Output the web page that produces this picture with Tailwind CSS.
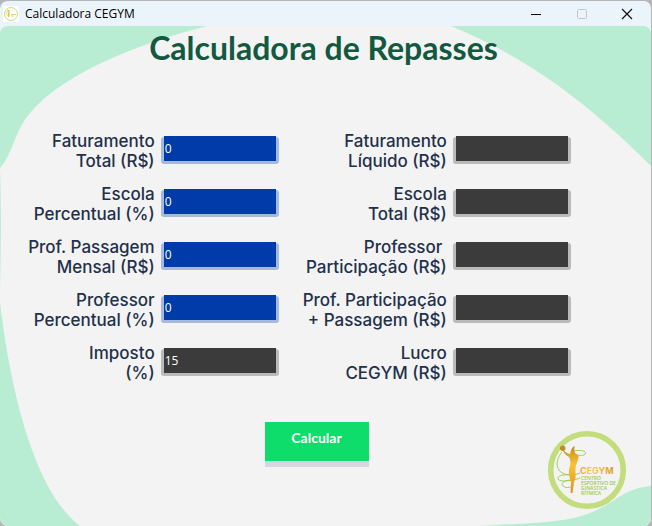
<!DOCTYPE html>
<html lang="pt-BR">
<head>
<meta charset="utf-8">
<meta name="viewport" content="width=device-width, initial-scale=1">
<title>Calculadora CEGYM</title>
<script src="https://cdn.jsdelivr.net/npm/@tailwindcss/browser@4"></script>
</head>
<body class="bg-[#b5b5b8]">
<div class="flex min-h-screen flex-col overflow-hidden rounded-lg border-t border-r border-[#b4b6b8] bg-[#ebf4fa]">
  <header class="flex h-[25px] items-center pr-px font-['Open_Sans','Noto_Sans',sans-serif]">
    <span class="ml-[3px] flex size-4 items-center justify-center bg-white">
      <svg class="size-4" viewBox="0 0 16 16" fill="none" aria-hidden="true"><circle cx="8" cy="8" r="6.5" stroke="#c3dc7c" stroke-width="1"/><path d="M4.500 4L6 5L5.500 11" stroke="#e5bb32" stroke-width="1.300"/><path d="M4.500 5C3 8 3 9.500 6.500 9.500M8 8.500h5M8 10h3" stroke="#d8c953" stroke-width=".8"/></svg>
    </span>
    <span class="ml-1.5 flex-1 text-[12px] text-black">Calculadora CEGYM</span>
    <button class="flex h-full w-[46px] items-center justify-center" aria-label="Minimizar"><svg class="size-3" viewBox="0 0 12 12" stroke="#000"><path d="M1 6.500h10"/></svg></button>
    <button class="flex h-full w-[45px] items-center justify-center" aria-label="Maximizar" disabled><svg class="size-3" viewBox="0 0 12 12" fill="none" stroke="#bfc5ca"><rect x="1.500" y="1.500" width="9" height="9" rx="1"/></svg></button>
    <button class="flex h-full w-[46px] items-center justify-center" aria-label="Fechar"><svg class="size-3" viewBox="0 0 12 12" stroke="#111" stroke-width="1.200"><path d="M1 1l10 10M11 1L1 11"/></svg></button>
  </header>
  <main class="relative isolate flex flex-1 flex-col overflow-hidden rounded-lg bg-[#f3f3f3]">
    <svg class="absolute inset-0 -z-10 size-full" viewBox="0 0 651 500" preserveAspectRatio="none" fill="#b8edd3" aria-hidden="true">
      <path d="M0 0H207C145 16 65 45 30 87C14 106 13 128 0 142Z"/>
      <path d="M451 0C530 33 588 77 651 140V0Z"/>
      <path d="M0 142C2 200 0 250 0 276C8 346 30 462 80 500H0Z"/>
      <path d="M480 500C530 497 565 497 590 487C617 476 622 463 651 460V500Z"/>
    </svg>
    <h1 class="pt-0.5 pr-1 text-center font-[Lato,sans-serif] text-[32px] leading-10 font-bold text-[#135940]">Calculadora de Repasses</h1>
    <form id="repasses" class="mt-[63px] flex justify-center gap-6 pr-[52px] font-[Inter,sans-serif] text-[17px] leading-5 font-medium text-[#23304a]">
      <div class="flex flex-col gap-[13px]">
        <div class="flex items-center justify-end gap-1.5"><label class="text-right" for="fat">Faturamento<br>Total (R$)</label><span class="mb-px flex rounded-[3px] bg-[#a6b9dd] px-[3px] pb-[3px]"><input id="fat" value="0" class="-mt-px h-[25px] w-28 bg-[#003ca9] px-px font-['Open_Sans',sans-serif] text-[12px] text-white outline-none"></span></div>
        <div class="flex items-center justify-end gap-1.5"><label class="text-right" for="esc">Escola<br>Percentual (%)</label><span class="mb-px flex rounded-[3px] bg-[#a6b9dd] px-[3px] pb-[3px]"><input id="esc" value="0" class="-mt-px h-[25px] w-28 bg-[#003ca9] px-px font-['Open_Sans',sans-serif] text-[12px] text-white outline-none"></span></div>
        <div class="flex items-center justify-end gap-1.5"><label class="text-right" for="pas">Prof. Passagem<br>Mensal (R$)</label><span class="mb-px flex rounded-[3px] bg-[#a6b9dd] px-[3px] pb-[3px]"><input id="pas" value="0" class="-mt-px h-[25px] w-28 bg-[#003ca9] px-px font-['Open_Sans',sans-serif] text-[12px] text-white outline-none"></span></div>
        <div class="flex items-center justify-end gap-1.5"><label class="text-right" for="pro">Professor<br>Percentual (%)</label><span class="mb-px flex rounded-[3px] bg-[#a6b9dd] px-[3px] pb-[3px]"><input id="pro" value="0" class="-mt-px h-[25px] w-28 bg-[#003ca9] px-px font-['Open_Sans',sans-serif] text-[12px] text-white outline-none"></span></div>
        <div class="flex items-center justify-end gap-1.5"><label class="text-right" for="imp">Imposto<br>(%)</label><span class="mb-px flex rounded-[3px] bg-[#bababa] px-[3px] pb-[3px]"><input id="imp" value="15" class="-mt-px h-[25px] w-28 bg-[#3b3b3b] px-px font-['Open_Sans',sans-serif] text-[12px] text-white outline-none"></span></div>
      </div>
      <div class="flex flex-col gap-[13px]">
        <div class="flex items-center justify-end gap-1.5"><label class="text-right" for="liq">Faturamento<br>Líquido (R$)</label><span class="mb-px flex rounded-[3px] bg-[#bababa] px-[3px] pb-[3px]"><input id="liq" readonly class="-mt-px h-[25px] w-28 bg-[#3b3b3b] px-px font-['Open_Sans',sans-serif] text-[12px] text-white outline-none"></span></div>
        <div class="flex items-center justify-end gap-1.5"><label class="text-right" for="tot">Escola<br>Total (R$)</label><span class="mb-px flex rounded-[3px] bg-[#bababa] px-[3px] pb-[3px]"><input id="tot" readonly class="-mt-px h-[25px] w-28 bg-[#3b3b3b] px-px font-['Open_Sans',sans-serif] text-[12px] text-white outline-none"></span></div>
        <div class="flex items-center justify-end gap-1.5"><label class="text-right" for="par">Professor&nbsp;<br>Participação (R$)</label><span class="mb-px flex rounded-[3px] bg-[#bababa] px-[3px] pb-[3px]"><input id="par" readonly class="-mt-px h-[25px] w-28 bg-[#3b3b3b] px-px font-['Open_Sans',sans-serif] text-[12px] text-white outline-none"></span></div>
        <div class="flex items-center justify-end gap-1.5"><label class="text-right" for="pp">Prof. Participação<br>+ Passagem (R$)</label><span class="mb-px flex rounded-[3px] bg-[#bababa] px-[3px] pb-[3px]"><input id="pp" readonly class="-mt-px h-[25px] w-28 bg-[#3b3b3b] px-px font-['Open_Sans',sans-serif] text-[12px] text-white outline-none"></span></div>
        <div class="flex items-center justify-end gap-1.5"><label class="text-right" for="luc">Lucro<br>CEGYM (R$)</label><span class="mb-px flex rounded-[3px] bg-[#bababa] px-[3px] pb-[3px]"><input id="luc" readonly class="-mt-px h-[25px] w-28 bg-[#3b3b3b] px-px font-['Open_Sans',sans-serif] text-[12px] text-white outline-none"></span></div>
      </div>
    </form>
    <footer class="mt-auto flex items-start justify-center pb-4">
      <div class="flex-1 pl-1.5"></div>
      <button form="repasses" type="button" class="flex w-[104px] flex-col bg-linear-to-b from-[#c3c2d3] to-[#d8d8e1] pb-1.5"><span class="w-full bg-[#0edc6b] pt-1.5 pb-[13px] font-[Lato,sans-serif] text-[14px] leading-5 font-bold text-white">Calcular</span></button>
      <div class="flex flex-1 justify-end pt-2 pr-6">
        <svg class="size-20" viewBox="0 0 80 80" fill="none" role="img" aria-label="CEGYM Centro Esportivo de Ginástica Rítmica">
          <defs>
            <linearGradient id="gold" x1="0" y1="0" x2="0" y2="1"><stop stop-color="#c58a20"/><stop offset=".4" stop-color="#f6c437"/><stop offset="1" stop-color="#e0951d"/></linearGradient>
            <linearGradient id="word"><stop stop-color="#f0a03c"/><stop offset=".35" stop-color="#f7cf5e"/><stop offset="1" stop-color="#dc9820"/></linearGradient>
          </defs>
          <circle cx="40" cy="40" r="36.300" stroke="#c3dc7c" stroke-width="5.600"/>
          <path d="M27 21C32 20 38 20 38.500 23C38.500 26 34 25.500 30 25M15 22C11 27 8 34 12 40C16 46 27 46 33 43M25 45C16 44 10 46 11 49C13 53 28 50 33 48M26 50C17 50 13 53 16 56C19 59 25 57 27 55" stroke="#9bca4b" stroke-width=".9"/>
          <path d="M15.500 20L17 20.500C19 23 21 23.500 23 24C24 21 24 18 27.500 16C27.500 19 27 21 28 23L31.500 25.500C32 29 29 34 28.500 38C28 43 30 47 27 52L25.500 63H23.500L24 52C22 46 21 41 23 36C24 32 23 29 22 27C19 25.500 17 23 15.500 20Z" fill="url(#gold)"/>
          <circle cx="15.700" cy="18.300" r="2.700" fill="#c48b22"/>
          <text x="33" y="43.500" font-family="Inter, sans-serif" font-size="9" font-weight="700" fill="url(#word)">CEGYM</text>
          <g font-family="'Open Sans', sans-serif" font-size="5" font-weight="600" fill="#9bc94b">
            <text x="34" y="50">CENTRO</text><text x="34" y="55">ESPORTIVO DE</text><text x="34" y="60">GINÁSTICA</text><text x="34" y="65">RÍTMICA</text>
          </g>
        </svg>
      </div>
    </footer>
  </main>
</div>
</body>
</html>
